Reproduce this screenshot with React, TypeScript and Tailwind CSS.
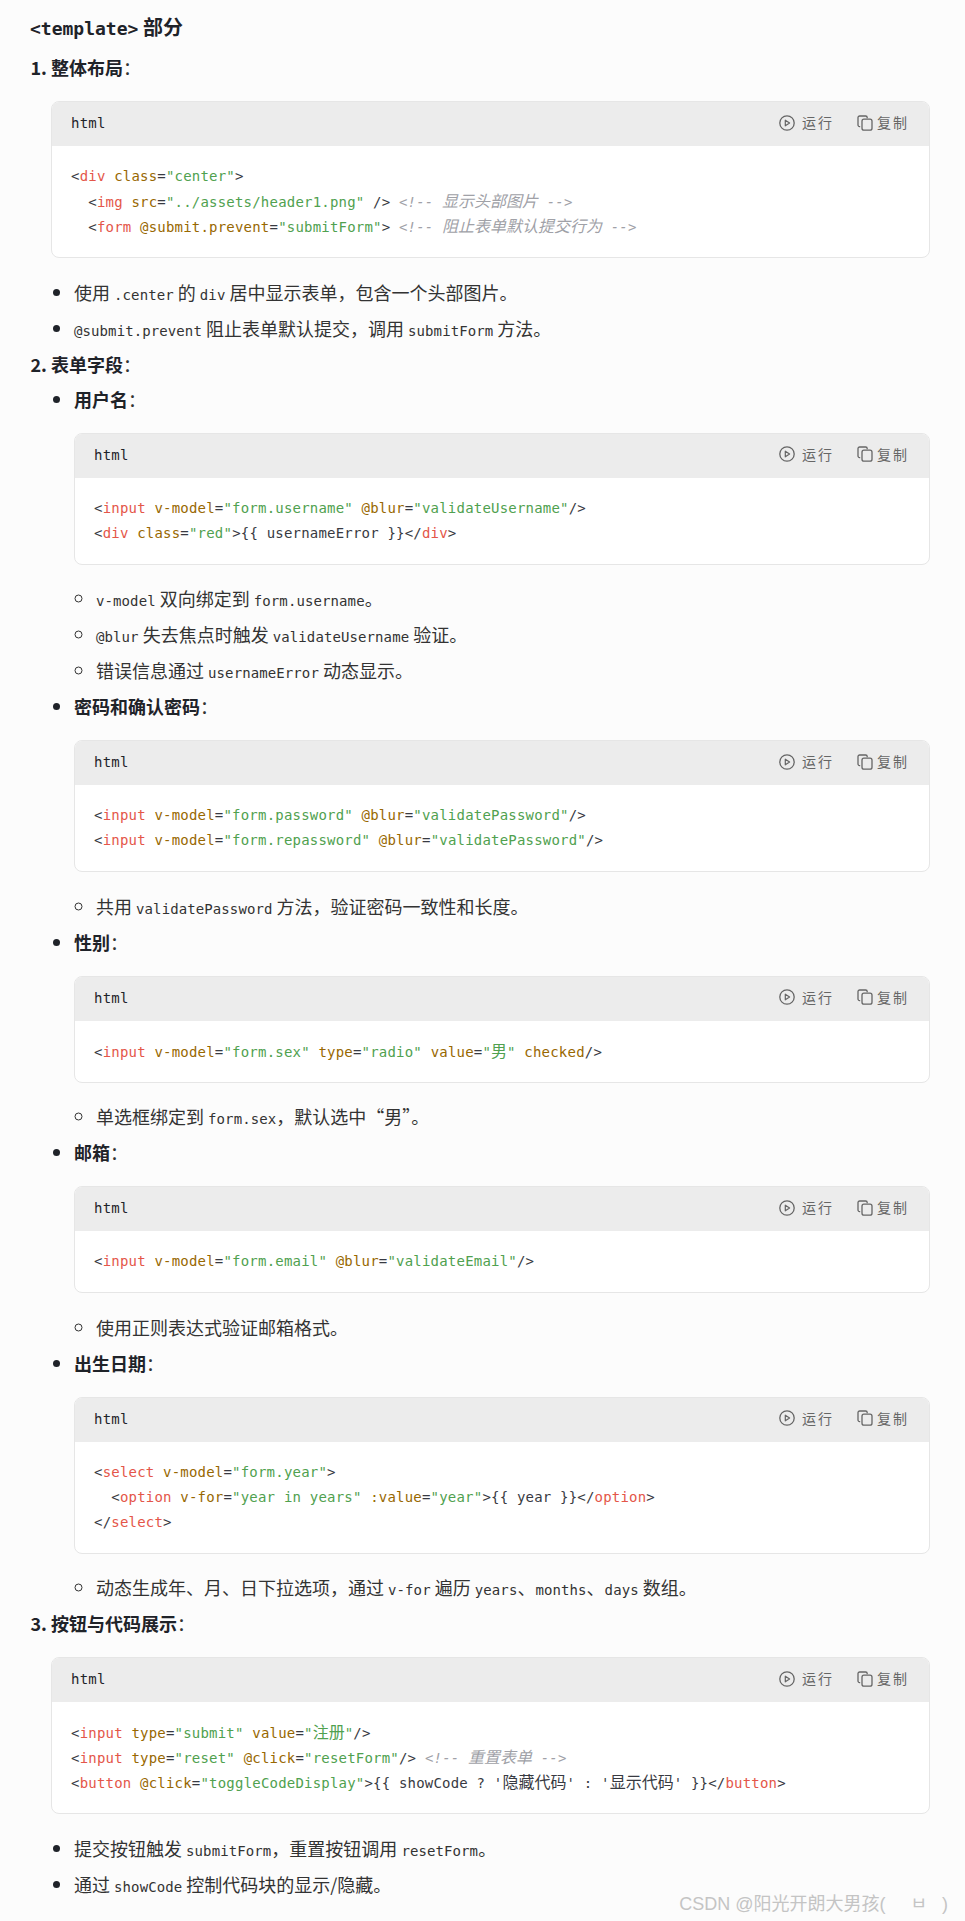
import type { ReactNode } from "react"

type Tok = [string, string]

const tokClass: Record<string, string> = {
  p: "text-[#383a42]",
  t: "text-[#e45649]",
  a: "text-[#986801]",
  s: "text-[#50a14f]",
  c: "text-[#a0a1a7] italic",
  // cjk runs inside code are drawn 16px in the reference
  pz: "text-[#383a42] text-[16px] tracking-normal",
  sz: "text-[#50a14f] text-[16px] tracking-normal",
  cz: "text-[#a0a1a7] italic text-[16px] tracking-normal",
}

const P = (s: string): Tok => ["p", s]
const T = (s: string): Tok => ["t", s]
const A = (s: string): Tok => ["a", s]
const S = (s: string): Tok => ["s", s]
const C = (s: string): Tok => ["c", s]
const PZ = (s: string): Tok => ["pz", s]
const SZ = (s: string): Tok => ["sz", s]
const CZ = (s: string): Tok => ["cz", s]

function PlayIcon() {
  return (
    <svg width="16" height="16" viewBox="0 0 16 16" fill="none" className="shrink-0">
      <circle cx="8" cy="8" r="7.2" stroke="#666" strokeWidth="1.3" />
      <path d="M6.3 5.2 10.6 8l-4.3 2.8z" stroke="#666" strokeWidth="1.2" strokeLinejoin="round" />
    </svg>
  )
}

function CopyIcon() {
  return (
    <svg width="16" height="16" viewBox="0 0 16 16" fill="none" className="shrink-0">
      <path d="M3.2 11.6H2.6A1.6 1.6 0 0 1 1 10V2.6A1.6 1.6 0 0 1 2.6 1h6A1.6 1.6 0 0 1 10.2 2.6v.6" stroke="#666" strokeWidth="1.3" />
      <rect x="5" y="4.2" width="10" height="11" rx="2" stroke="#666" strokeWidth="1.3" />
    </svg>
  )
}

function CodeBlock({ lines }: { lines: Tok[][] }) {
  return (
    <div className="mt-[20px] mb-[19.5px] rounded-[8px] border border-[#e6e6e6] bg-white overflow-hidden font-['DejaVu_Sans_Mono','Noto_Sans_CJK_SC',monospace]">
      <div className="flex h-[45px] items-center justify-between bg-[#ececec] pl-[19px] pr-[20px] -mt-px">
        <span className="text-[14px] tracking-[0.2px] text-[#1f2329]">html</span>
        <div className="flex items-center pb-[2px] text-[14px] tracking-[2px] text-[#666] font-['Noto_Sans_CJK_SC',sans-serif]">
          <PlayIcon />
          <span className="ml-[7px]">运行</span>
          <span className="ml-[23px]"><CopyIcon /></span>
          <span className="ml-[4px]">复制</span>
        </div>
      </div>
      <div className="px-[19px] pt-[18px] pb-[18px] text-[14px] leading-[25px] tracking-[0.2px] whitespace-pre">
        {lines.map((line, i) => (
          <div key={i} className="h-[25px]">
            {line.map(([k, s], j) => (
              <span key={j} className={tokClass[k]}>{s}</span>
            ))}
          </div>
        ))}
      </div>
    </div>
  )
}

function Code({ children }: { children: ReactNode }) {
  return <code className="font-['DejaVu_Sans_Mono',monospace] text-[14px] tracking-[0.1px]">{children}</code>
}

function Bullet({ children }: { children: ReactNode }) {
  return <li className="mb-[8px] h-[28px] leading-[28px]">{children}</li>
}

function Outer({ children }: { children: ReactNode }) {
  return <ul className="list-disc pl-[23px] marker:text-[#1f2329]">{children}</ul>
}

function Inner({ children }: { children: ReactNode }) {
  return <ul className="list-[circle] pl-[22px] marker:text-[#333]">{children}</ul>
}

function Title({ children }: { children: ReactNode }) {
  return (
    <div className="h-[28px] leading-[28px]">
      <strong className="font-bold text-[#1f2329]">{children}</strong>：
    </div>
  )
}

export default function App() {
  return (
    <div className="relative h-[1921px] overflow-hidden bg-[#fcfcfc] pl-[30px] pr-[35px] text-[18px] text-[#333] font-['Noto_Sans_CJK_SC','Noto_Sans',sans-serif]">
      <h4 className="pt-[13px] h-[53px] text-[20px] leading-[28px] font-bold text-[#1f2329]">
        <code className="font-['DejaVu_Sans_Mono',monospace] text-[18px]">&lt;template&gt;</code> 部分
      </h4>

      <ol className="list-decimal pl-[21px] marker:font-bold marker:text-[#1f2329]">
        <li className="mb-[8px]">
          <Title>整体布局</Title>
          <CodeBlock
            lines={[
              [P("<"), T("div"), P(" "), A("class"), P("="), S('"center"'), P(">")],
              [P("  <"), T("img"), P(" "), A("src"), P("="), S('"../assets/header1.png"'), P(" /> "), C("<!-- "), CZ("显示头部图片"), C(" -->")],
              [P("  <"), T("form"), P(" "), A("@submit.prevent"), P("="), S('"submitForm"'), P("> "), C("<!-- "), CZ("阻止表单默认提交行为"), C(" -->")],
            ]}
          />
          <Outer>
            <Bullet>使用 <Code>.center</Code> 的 <Code>div</Code> 居中显示表单，包含一个头部图片。</Bullet>
            <Bullet><Code>@submit.prevent</Code> 阻止表单默认提交，调用 <Code>submitForm</Code> 方法。</Bullet>
          </Outer>
        </li>

        <li className="mb-[8px]">
          <Title>表单字段</Title>
          <ul className="list-disc pl-[23px] mt-[7px] marker:text-[#1f2329]">
            <li className="mb-[8px]">
              <Title>用户名</Title>
              <CodeBlock
                lines={[
                  [P("<"), T("input"), P(" "), A("v-model"), P("="), S('"form.username"'), P(" "), A("@blur"), P("="), S('"validateUsername"'), P("/>")],
                  [P("<"), T("div"), P(" "), A("class"), P("="), S('"red"'), P(">{{ usernameError }}</"), T("div"), P(">")],
                ]}
              />
              <Inner>
                <Bullet><Code>v-model</Code> 双向绑定到 <Code>form.username</Code>。</Bullet>
                <Bullet><Code>@blur</Code> 失去焦点时触发 <Code>validateUsername</Code> 验证。</Bullet>
                <Bullet>错误信息通过 <Code>usernameError</Code> 动态显示。</Bullet>
              </Inner>
            </li>
            <li className="mb-[8px]">
              <Title>密码和确认密码</Title>
              <CodeBlock
                lines={[
                  [P("<"), T("input"), P(" "), A("v-model"), P("="), S('"form.password"'), P(" "), A("@blur"), P("="), S('"validatePassword"'), P("/>")],
                  [P("<"), T("input"), P(" "), A("v-model"), P("="), S('"form.repassword"'), P(" "), A("@blur"), P("="), S('"validatePassword"'), P("/>")],
                ]}
              />
              <Inner>
                <Bullet>共用 <Code>validatePassword</Code> 方法，验证密码一致性和长度。</Bullet>
              </Inner>
            </li>
            <li className="mb-[8px]">
              <Title>性别</Title>
              <CodeBlock
                lines={[
                  [P("<"), T("input"), P(" "), A("v-model"), P("="), S('"form.sex"'), P(" "), A("type"), P("="), S('"radio"'), P(" "), A("value"), P("="), S('"'), SZ("男"), S('"'), P(" "), A("checked"), P("/>")],
                ]}
              />
              <Inner>
                <Bullet>单选框绑定到 <Code>form.sex</Code>，默认选中“男”。</Bullet>
              </Inner>
            </li>
            <li className="mb-[8px]">
              <Title>邮箱</Title>
              <CodeBlock
                lines={[
                  [P("<"), T("input"), P(" "), A("v-model"), P("="), S('"form.email"'), P(" "), A("@blur"), P("="), S('"validateEmail"'), P("/>")],
                ]}
              />
              <Inner>
                <Bullet>使用正则表达式验证邮箱格式。</Bullet>
              </Inner>
            </li>
            <li className="mb-[8px]">
              <Title>出生日期</Title>
              <CodeBlock
                lines={[
                  [P("<"), T("select"), P(" "), A("v-model"), P("="), S('"form.year"'), P(">")],
                  [P("  <"), T("option"), P(" "), A("v-for"), P("="), S('"year in years"'), P(" "), A(":value"), P("="), S('"year"'), P(">{{ year }}</"), T("option"), P(">")],
                  [P("</"), T("select"), P(">")],
                ]}
              />
              <Inner>
                <Bullet>动态生成年、月、日下拉选项，通过 <Code>v-for</Code> 遍历 <Code>years</Code>、<Code>months</Code>、<Code>days</Code> 数组。</Bullet>
              </Inner>
            </li>
          </ul>
        </li>

        <li>
          <Title>按钮与代码展示</Title>
          <CodeBlock
            lines={[
              [P("<"), T("input"), P(" "), A("type"), P("="), S('"submit"'), P(" "), A("value"), P("="), S('"'), SZ("注册"), S('"'), P("/>")],
              [P("<"), T("input"), P(" "), A("type"), P("="), S('"reset"'), P(" "), A("@click"), P("="), S('"resetForm"'), P("/> "), C("<!-- "), CZ("重置表单"), C(" -->")],
              [P("<"), T("button"), P(" "), A("@click"), P("="), S('"toggleCodeDisplay"'), P(">{{ showCode ? '"), PZ("隐藏代码"), P("' : '"), PZ("显示代码"), P("' }}</"), T("button"), P(">")],
            ]}
          />
          <Outer>
            <Bullet>提交按钮触发 <Code>submitForm</Code>，重置按钮调用 <Code>resetForm</Code>。</Bullet>
            <Bullet>通过 <Code>showCode</Code> 控制代码块的显示/隐藏。</Bullet>
          </Outer>
        </li>
      </ol>

      <div className="absolute right-[17px] top-[1892px] whitespace-pre text-[18px] leading-[24px] text-[#c4c4c4] font-['Liberation_Sans','Noto_Sans_CJK_SC',sans-serif]">
        CSDN @阳光开朗大男孩(     ㅂ   )
      </div>
    </div>
  )
}
